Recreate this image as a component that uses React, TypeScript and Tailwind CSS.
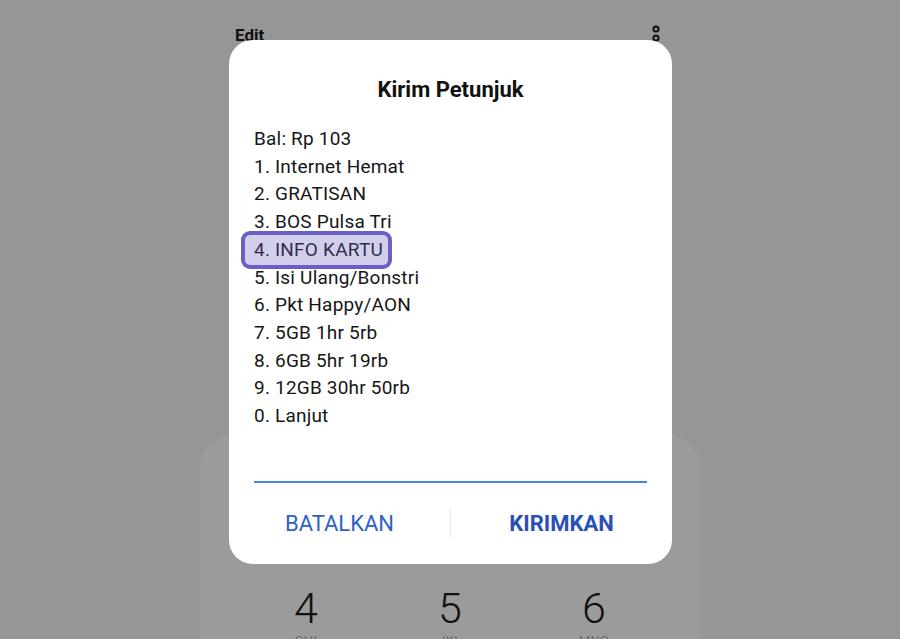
import React from 'react'

const lines = [
  'Bal: Rp 103',
  '1. Internet Hemat',
  '2. GRATISAN',
  '3. BOS Pulsa Tri',
  '4. INFO KARTU',
  '5. Isi Ulang/Bonstri',
  '6. Pkt Happy/AON',
  '7. 5GB 1hr 5rb',
  '8. 6GB 5hr 19rb',
  '9. 12GB 30hr 50rb',
  '0. Lanjut',
]

const keys = [
  { n: '4', l: 'GHI' },
  { n: '5', l: 'JKL' },
  { n: '6', l: 'MNO' },
]

function MoreDots() {
  return (
    <svg width="12" height="22" viewBox="0 0 12 22" fill="none" stroke="#111" strokeWidth="2">
      <circle cx="6" cy="4" r="2.6" />
      <circle cx="6" cy="13" r="2.6" />
      <circle cx="6" cy="22" r="2.6" />
    </svg>
  )
}

export default function App() {
  return (
    <div
      className="relative w-[900px] h-[639px] overflow-hidden bg-[#969696]"
      style={{ fontFamily: 'Roboto, "Noto Sans", sans-serif' }}
    >
      {/* page behind the dialog */}
      <div className="mx-auto w-[500px] flex flex-col">
        <div className="flex items-start justify-between pt-[24px] pl-[35px] pr-[38px] h-[48px]">
          <span className="text-[17px] font-bold text-[#111] leading-[22px]">Edit</span>
          <div className="pt-[1px]">
            <MoreDots />
          </div>
        </div>
        <div className="mt-[387px] h-[220px] rounded-t-[32px] bg-[#9b9b9b] px-[34px] pt-[148px]">
          <div className="grid grid-cols-3">
            {keys.map((k) => (
              <div key={k.n} className="flex flex-col items-center">
                <span className="text-[43px] font-light leading-[50px] text-[#111]">{k.n}</span>
                <span className="text-[13px] leading-[16px] tracking-wide text-[#6f6f6f]">{k.l}</span>
              </div>
            ))}
          </div>
        </div>
      </div>

      {/* dialog */}
      <div className="absolute left-[229px] top-[40px] w-[443px] h-[524px] bg-white rounded-[24px] flex flex-col">
        <h2 className="pt-[36px] text-center text-[22px] font-bold leading-[28px] text-[#111]">Kirim Petunjuk</h2>
        <div className="mt-[21px] px-[25px] text-[19px] tracking-[0.2px] leading-[27.7px] text-[#161616]">
          {lines.map((t) => (
            <div key={t} className="relative">
              {t === '4. INFO KARTU' && (
                <span className="absolute left-[-13px] top-[-5px] w-[151px] h-[38px] rounded-[9px] border-[4px] border-[#6a5fc4] bg-[#6a5fc4]/30" />
              )}
              {t}
            </div>
          ))}
        </div>
        <div className="mt-[51px] mx-[25px] h-[2px] bg-[#4a80e6]" />
        <div className="flex flex-1 items-center">
          <button className="flex-1 text-center text-[22px] text-[#2f5fc8] leading-[26px] pt-[2px]">BATALKAN</button>
          <div className="w-px h-[30px] bg-[#ececec]" />
          <button className="flex-1 text-center text-[22px] font-bold text-[#2a50b8] leading-[26px] pt-[2px]">KIRIMKAN</button>
        </div>
      </div>
    </div>
  )
}
